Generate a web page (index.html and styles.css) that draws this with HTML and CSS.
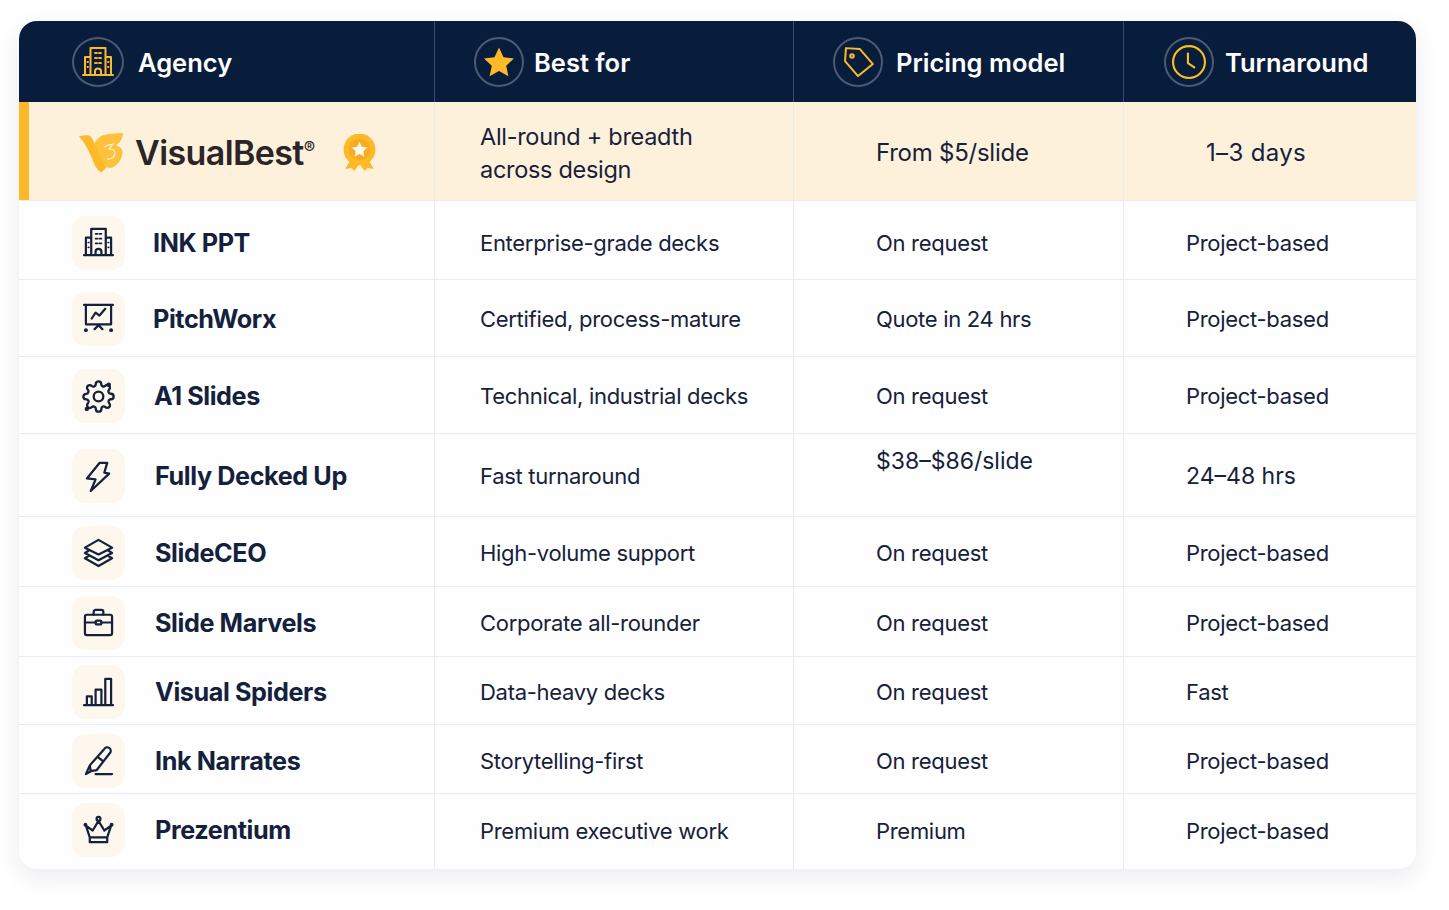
FILE: index.html
```html
<!DOCTYPE html>
<html lang="en">
<head>
<meta charset="utf-8">
<title>Agency comparison</title>
<link rel="stylesheet" href="styles.css">
</head>
<body>
<svg class="defs" width="0" height="0" aria-hidden="true">
  <defs>
    <g id="i-building">
      <path d="M1 29H31M8.500 29V2H23.500V29M8.500 11H3V29M23.500 11H29V29M13 29V25.500a3 3 0 0 1 6 0V29"/>
      <path class="dots" d="M13 7h2M17 7h2M13 12h2M17 12h2M13 17h2M17 17h2M5.500 16h.5M26 16h.5M5.500 21h.5M26 21h.5"/>
    </g>
    <g id="i-tag">
      <path d="M3 3H17L31 17L17 30L3 16Z" transform="rotate(4 16 16)"/>
      <circle class="solid" cx="10" cy="10" r="1.800"/>
    </g>
    <g id="i-clock">
      <circle cx="16" cy="16" r="15"/>
      <path d="M15 8V17L21 21"/>
    </g>
  </defs>
</svg>

<main class="card">
  <div class="row head">
    <div class="cell first"><span class="ring ring-wide"><svg class="ico gold" viewBox="0 0 32 32"><use href="#i-building"/></svg></span><span class="th">Agency</span></div>
    <div class="cell col2"><span class="ring"><svg class="ico star" viewBox="0 0 32 32"><path d="M16 1.500L20.500 11.200L31 12.500L23.200 19.700L25.400 30.200L16 25L6.600 30.200L8.800 19.700L1 12.500L11.500 11.200Z"/></svg></span><span class="th">Best for</span></div>
    <div class="cell col3"><span class="ring"><svg class="ico gold" viewBox="0 0 32 32"><use href="#i-tag"/></svg></span><span class="th">Pricing model</span></div>
    <div class="cell col4"><span class="ring"><svg class="ico gold clock" viewBox="0 0 32 32"><use href="#i-clock"/></svg></span><span class="th">Turnaround</span></div>
  </div>

  <div class="row top">
    <div class="cell brand">
      <svg class="logo" viewBox="0 0 45 40">
        <path class="logo-r" d="M14 14C16 8 20 3 25 2C31 .5 38 .2 44 0C44 4 42 9 37 12.500C41 13.500 44 16 43.500 20C43 25 40 30 36 33C33 35 30.500 35.500 28 34C22 28 18 21 14 14Z"/>
        <path class="logo-v" d="M0 3.300C4 2.500 8 2 10.700 2.700C13 4 14.500 8 16 12C18 18 21 25 25 30C26 32 27 33 28 34L22.300 39.600C19 38 16 33 14 28C11 20 6 10 0 3.300Z"/>
        <path class="logo-3" d="M25 14C28 12 31 11.500 34 11L30 16C33 16 36 17 36 20C36 24 32 27 28 26"/>
      </svg>
      <span class="wordmark">VisualBest<sup class="reg">®</sup></span>
      <svg class="medal" viewBox="0 0 32 36">
        <path class="medal-tail" d="M8 24L2 34L8 33L11 36L16 29L21 36L24 33L30 34L24 24Z"/>
        <circle class="medal-disc" cx="16" cy="15" r="15.500"/>
        <circle class="medal-inner" cx="16" cy="15" r="10.500"/>
        <path class="medal-star" d="M16 7.500L18.300 12.500L23.700 13.100L19.700 16.800L20.800 22.100L16 19.400L11.200 22.100L12.300 16.800L8.300 13.100L13.700 12.500Z"/>
      </svg>
    </div>
    <div class="cell col2 td tight"><span>All-round + breadth<br>across design</span></div>
    <div class="cell col3 td">From $5/slide</div>
    <div class="cell col4 td indent">1–3 days</div>
  </div>

  <div class="row r1">
    <div class="cell first name-a"><span class="tile"><svg class="ico navy" viewBox="0 0 32 32"><use href="#i-building"/></svg></span><span class="name">INK PPT</span></div>
    <div class="cell col2 td">Enterprise-grade decks</div>
    <div class="cell col3 td">On request</div>
    <div class="cell col4 td">Project-based</div>
  </div>

  <div class="row r2">
    <div class="cell first name-a"><span class="tile"><svg class="ico navy" viewBox="0 0 32 32"><path d="M1 2H31M3 2V22H29V2M9 16L13 10L17 13L23 6M12 27L16 23L20 27"/><circle class="solid" cx="3" cy="28" r="2"/><circle class="solid" cx="29" cy="28" r="2"/></svg></span><span class="name">PitchWorx</span></div>
    <div class="cell col2 td">Certified, process-mature</div>
    <div class="cell col3 td">Quote in 24 hrs</div>
    <div class="cell col4 td">Project-based</div>
  </div>

  <div class="row r3">
    <div class="cell first name-b"><span class="tile"><svg class="ico navy gear" viewBox="0 0 24 24"><circle cx="12" cy="12" r="3.500"/><path d="M19.400 15a1.650 1.650 0 0 0 .33 1.820l.06.06a2 2 0 0 1 0 2.830 2 2 0 0 1-2.830 0l-.06-.06a1.650 1.650 0 0 0-1.820-.33 1.650 1.650 0 0 0-1 1.510V21a2 2 0 0 1-2 2 2 2 0 0 1-2-2v-.09A1.650 1.650 0 0 0 9 19.400a1.650 1.650 0 0 0-1.820.33l-.06.06a2 2 0 0 1-2.830 0 2 2 0 0 1 0-2.830l.06-.06a1.650 1.650 0 0 0 .33-1.820 1.650 1.650 0 0 0-1.510-1H3a2 2 0 0 1-2-2 2 2 0 0 1 2-2h.09A1.650 1.650 0 0 0 4.600 9a1.650 1.650 0 0 0-.33-1.820l-.06-.06a2 2 0 0 1 0-2.830 2 2 0 0 1 2.830 0l.06.06a1.650 1.650 0 0 0 1.820.33H9a1.650 1.650 0 0 0 1-1.510V3a2 2 0 0 1 2-2 2 2 0 0 1 2 2v.09a1.650 1.650 0 0 0 1 1.510 1.650 1.650 0 0 0 1.820-.33l.06-.06a2 2 0 0 1 2.830 0 2 2 0 0 1 0 2.830l-.06.06a1.650 1.650 0 0 0-.33 1.820V9a1.650 1.650 0 0 0 1.510 1H21a2 2 0 0 1 2 2 2 2 0 0 1-2 2h-.09a1.650 1.650 0 0 0-1.510 1z"/><circle class="solid" cx="19.500" cy="3.500" r="1.600"/><circle class="solid" cx="3.500" cy="21" r="1.600"/></svg></span><span class="name">A1 Slides</span></div>
    <div class="cell col2 td">Technical, industrial decks</div>
    <div class="cell col3 td">On request</div>
    <div class="cell col4 td">Project-based</div>
  </div>

  <div class="row r4">
    <div class="cell first"><span class="tile"><svg class="ico navy" viewBox="0 0 32 32"><path d="M17 2H25L22 12L27 13L8 31L13 19L4 18Z"/></svg></span><span class="name">Fully Decked Up</span></div>
    <div class="cell col2 td">Fast turnaround</div>
    <div class="cell col3 td raised wide">$38–$86/slide</div>
    <div class="cell col4 td wide">24–48 hrs</div>
  </div>

  <div class="row r5">
    <div class="cell first"><span class="tile"><svg class="ico navy" viewBox="0 0 32 32"><path d="M16 3L30 11L16 18L2 11Z"/><path d="M6 14L2 16.500L16 24L30 16.500L26 14M6 19.500L2 22L16 30L30 22L26 19.500"/></svg></span><span class="name">SlideCEO</span></div>
    <div class="cell col2 td">High-volume support</div>
    <div class="cell col3 td">On request</div>
    <div class="cell col4 td">Project-based</div>
  </div>

  <div class="row r6">
    <div class="cell first"><span class="tile"><svg class="ico navy" viewBox="0 0 32 32"><rect x="2" y="8" width="28" height="21" rx="2"/><path d="M11 8V5a2 2 0 0 1 2-2h6a2 2 0 0 1 2 2V8M2 16H13M19 16H30"/><rect x="13" y="14" width="6" height="4" rx="1.500"/></svg></span><span class="name">Slide Marvels</span></div>
    <div class="cell col2 td">Corporate all-rounder</div>
    <div class="cell col3 td">On request</div>
    <div class="cell col4 td">Project-based</div>
  </div>

  <div class="row r7">
    <div class="cell first"><span class="tile"><svg class="ico navy" viewBox="0 0 32 32"><path d="M1 30H31M4 30V21H9V30M13 30V14H19V30M23 30V3H29V30"/></svg></span><span class="name">Visual Spiders</span></div>
    <div class="cell col2 td">Data-heavy decks</div>
    <div class="cell col3 td">On request</div>
    <div class="cell col4 td">Fast</div>
  </div>

  <div class="row r8">
    <div class="cell first"><span class="tile"><svg class="ico navy" viewBox="0 0 32 32"><path d="M22 3a3.500 3.500 0 0 1 6 4L14 25L8 26L7 20ZM7 20L3 29L8 26M13 29H30M16 12L20 15"/></svg></span><span class="name">Ink Narrates</span></div>
    <div class="cell col2 td">Storytelling-first</div>
    <div class="cell col3 td">On request</div>
    <div class="cell col4 td">Project-based</div>
  </div>

  <div class="row r9">
    <div class="cell first"><span class="tile"><svg class="ico navy" viewBox="0 0 32 32"><path d="M3 11L7 23H25L29 11L22 16L16 6L10 16ZM7 23V28H25V23"/><circle cx="16" cy="4" r="2"/><circle class="solid" cx="2.500" cy="10" r="2"/><circle class="solid" cx="29.500" cy="10" r="2"/></svg></span><span class="name">Prezentium</span></div>
    <div class="cell col2 td">Premium executive work</div>
    <div class="cell col3 td">Premium</div>
    <div class="cell col4 td">Project-based</div>
  </div>
</main>
</body>
</html>
```

FILE: styles.css
```css
* { box-sizing: border-box; }

html, body { margin: 0; background: #fff; }

body {
  padding: 21px 33px 0 19px;
  height: 910px;
  overflow: hidden;
  font-family: Inter, "Liberation Sans", sans-serif;
  color: #16213a;
}

.defs { position: absolute; }

.card {
  width: 1397px;
  height: 848px;
  display: grid;
  grid-template-rows: 81px 99px 79px 77px 77px 83px 70px 70px 68px 69px 75px;
  background: #fefefe;
  border-radius: 18px;
  overflow: hidden;
  box-shadow: 0 8px 26px rgba(20, 33, 61, .09);
}

.row {
  display: grid;
  grid-template-columns: 416px 359px 330px 292px;
  border-bottom: 1px solid #e9ebee;
}

.row:last-child { border-bottom: 0; }

.cell {
  display: flex;
  align-items: center;
  border-right: 1px solid #e9ebee;
  padding-top: 2px;
}

.cell:last-child { border-right: 0; }

/* header */
.head { background: #081c3c; border-bottom: 0; }
.head .cell { border-right-color: #3d4c66; padding-top: 1px; }
.head .first { padding-left: 53px; }
.head .col2 { padding-left: 39px; }
.head .col3 { padding-left: 39px; }
.head .col4 { padding-left: 40px; }

.ring {
  flex: none;
  width: 50px;
  height: 50px;
  margin-right: 12px;
  display: flex;
  align-items: center;
  justify-content: center;
  border: 2px solid #4c5a72;
  border-radius: 50%;
}

.ring-wide { width: 52px; margin-right: 14px; }
.head .col2 .ring { margin-right: 10px; }
.head .col3 .ring { margin-right: 13px; }
.head .col4 .ring { margin-right: 11px; }

.th {
  font-size: 25.500px;
  font-weight: 600;
  color: #fff;
  white-space: nowrap;
}

/* icons */
.ico { fill: none; stroke-linejoin: round; stroke-linecap: round; stroke-width: 2; }
.ico .solid { stroke: none; }
.gold { width: 32px; height: 32px; stroke: #fdb927; }
.gold .solid { fill: #fdb927; }
.gold.clock { width: 34px; height: 34px; stroke: #f8c01f; }
.navy { width: 31px; height: 31px; stroke: #14213d; stroke-width: 2.300; }
.navy .solid { fill: #14213d; }
.gear { width: 33px; height: 33px; stroke-width: 1.700; }
.star { width: 32px; height: 32px; fill: #fdb927; stroke: none; }
.dots { stroke-width: 1.800; }

.tile {
  flex: none;
  width: 53px;
  height: 54px;
  display: flex;
  align-items: center;
  justify-content: center;
  background: #fdf7ed;
  border-radius: 14px;
}

/* highlighted row */
.top { background: #fdf1dc; }
.top .cell { padding-top: 3px; }

.brand {
  border-left: 10px solid #fdb927;
  padding-left: 50px;
}

.logo { flex: none; width: 45px; height: 40px; }
.logo-v { fill: #fdb927; }
.logo-r { fill: #fdc23c; }
.logo-3 { fill: none; stroke: #fdf1dc; stroke-width: 1.200; }

.wordmark {
  margin-left: 11px;
  font-size: 34px;
  font-weight: 600;
  letter-spacing: -.6px;
  color: #2a2527;
  white-space: nowrap;
}

.reg {
  font-size: 17px;
  font-weight: 400;
  vertical-align: 11px;
  line-height: 0;
  letter-spacing: 0;
}

.medal { flex: none; width: 33px; height: 37px; margin-left: 28px; }
.medal-disc { fill: #fdb927; }
.medal-inner { fill: #f9ac22; }
.medal-tail { fill: #fdb927; }
.medal-star { fill: #fff8ea; }

/* body rows */
.first { padding-left: 53px; }
.name {
  margin-left: 30px;
  font-size: 25.200px;
  font-weight: 650;
  letter-spacing: -.4px;
  color: #14213d;
  white-space: nowrap;
}
.name-a .name { margin-left: 28px; }
.name-b .name { margin-left: 29px; }

.td { font-size: 22px; font-weight: 400; letter-spacing: -.3px; white-space: nowrap; }
.top .td { font-size: 24px; letter-spacing: -.25px; }
.top .tight { font-size: 23.500px; letter-spacing: -.3px; line-height: 33px; }
.top .indent { letter-spacing: .35px; }
.wide.td { font-size: 23px; letter-spacing: 0; }
.col2.td { padding-left: 45px; }
.col3.td { padding-left: 82px; }
.col4.td { padding-left: 62px; }
.col4.indent { padding-left: 82px; }

.r1 .cell { padding-top: 5px; }
.r2 .cell { padding-top: 1px; }
.r8 .cell { padding-top: 4px; }
.r9 .cell { padding-top: 0; padding-bottom: 1px; }
.r9 .first { padding-bottom: 3px; }
.r4 .raised { align-items: flex-start; padding-top: 13px; }
```
